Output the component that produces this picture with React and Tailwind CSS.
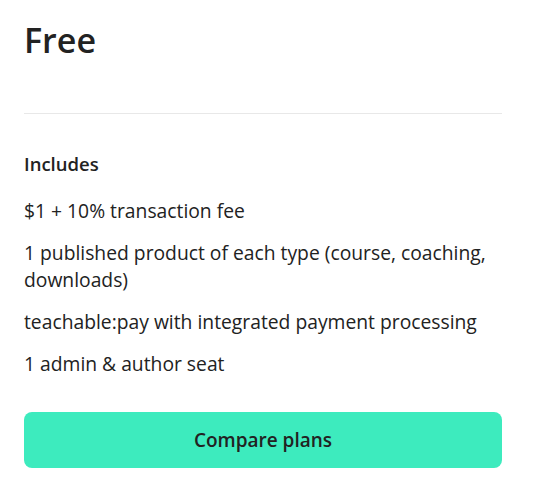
const items = [
  "$1 + 10% transaction fee",
  "1 published product of each type (course, coaching, downloads)",
  "teachable:pay with integrated payment processing",
  "1 admin & author seat",
];

export default function App() {
  return (
    <div className="min-h-screen bg-white font-['Open_Sans',sans-serif] text-[#222222]">
      <div className="ml-6 w-[478px] pt-[18px]">
        <h1 className="text-[34px] leading-[44px] font-semibold">Free</h1>
        <div className="mt-[51px] h-px bg-[#e8e8e8]" />
        <h2 className="mt-9 text-[18.5px] leading-[27px] font-semibold">Includes</h2>
        <ul className="mt-5 flex flex-col gap-[15px] text-[19.3px] leading-[27px]">
          {items.map((item) => (
            <li key={item}>{item}</li>
          ))}
        </ul>
        <button className="mt-[35px] flex h-14 w-full items-center justify-center rounded-lg bg-[#3debbe] text-[19px] font-semibold text-[#222222]">
          Compare plans
        </button>
      </div>
    </div>
  );
}
